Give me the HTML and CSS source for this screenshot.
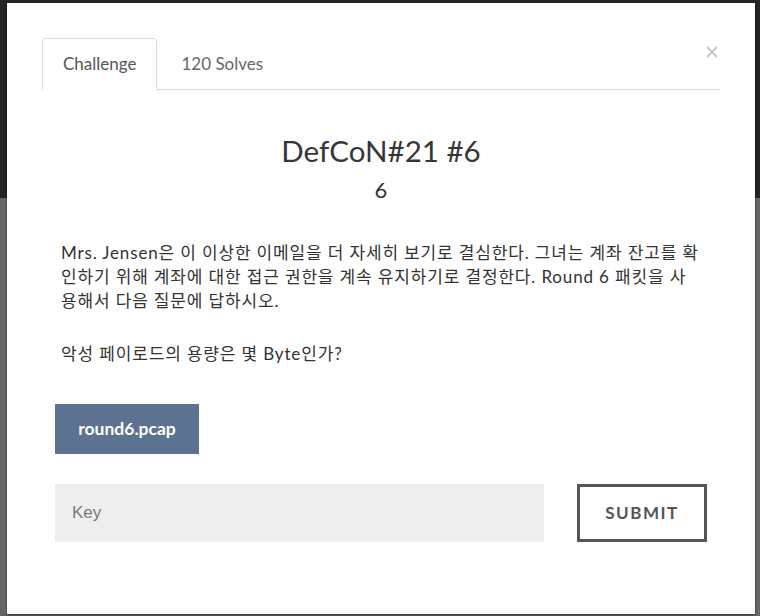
FILE: index.html
```html
<!DOCTYPE html>
<html lang="ko">

<head>
    <meta charset="UTF-8">
    <meta name="viewport" content="width=device-width, initial-scale=1.0">
    <title>DefCoN#21 #6</title>
    <link rel="stylesheet" href="styles.css">
</head>

<body>
    <div class="modal">
        <button class="close" type="button" aria-label="Close">
            <svg width="12" height="12" viewBox="0 0 12 12">
                <path d="M1 1L11 11M11 1L1 11" stroke="#c8c8c8" stroke-width="1.8" fill="none" />
            </svg>
        </button>

        <ul class="nav-tabs">
            <li class="tab active">Challenge</li>
            <li class="tab">120 Solves</li>
        </ul>

        <div class="challenge">
            <h2 class="challenge-name">DefCoN#21 #6</h2>
            <h3 class="challenge-value">6</h3>

            <div class="challenge-desc">
                <p>Mrs. Jensen은 이 이상한 이메일을 더 자세히 보기로 결심한다. 그녀는 계좌 잔고를 확인하기 위해 계좌에 대한 접근 권한을 계속 유지하기로 결정한다. Round 6 패킷을 사용해서 다음 질문에 답하시오.</p>
                <p>악성 페이로드의 용량은 몇 Byte인가?</p>
            </div>

            <div class="files">
                <a class="file-button">round6.pcap</a>
            </div>

            <form class="answer-row">
                <input class="answer-input" type="text" placeholder="Key">
                <button class="submit-button" type="button">SUBMIT</button>
            </form>
        </div>
    </div> <!-- .modal -->
</body>

</html>
```

FILE: styles.css
```css
html,
body {
    margin: 0;
    height: 100%;
}

body {
    background: linear-gradient(#242424 0, #242424 198px, #676767 198px);
    padding-top: 3px;
    box-sizing: border-box;
    overflow: hidden;
    font-family: Lato, "Noto Sans CJK KR", sans-serif;
    color: #333;
}

.modal {
    position: relative;
    width: 748px;
    height: 611px;
    margin-left: 7px;
    background: #fff;
    box-sizing: border-box;
    padding: 35px 35px 0 35px;
    box-shadow: 0 1px 2px rgba(0, 0, 0, 0.6);
}

.close {
    position: absolute;
    top: 43px;
    right: 37px;
    padding: 0;
    border: 0;
    background: none;
    line-height: 0;
}

.nav-tabs {
    display: flex;
    list-style: none;
    margin: 0;
    padding: 0;
    border-bottom: 1px solid #ddd;
}

.tab {
    padding: 13px 20px;
    margin-bottom: -1px;
    margin-right: 3px;
    font-size: 17px;
    line-height: 24px;
    color: #666;
    border: 1px solid transparent;
    border-radius: 4px 4px 0 0;
}

.tab.active {
    color: #555;
    background: #fff;
    border-color: #ddd #ddd #fff;
}

.challenge {
    padding: 0 13px;
}

.challenge-name {
    margin: 43px 0 0;
    text-align: center;
    font-size: 29.5px;
    font-weight: 400;
    line-height: 1.2;
    color: #363636;
}

.challenge-value {
    margin: 9px 0 0;
    text-align: center;
    font-size: 22px;
    font-weight: 400;
    line-height: 1.2;
    color: #333;
}

.challenge-desc {
    padding: 0 6px;
    margin-top: 37px;
}

.challenge-desc p {
    margin: 0 0 28px;
    font-size: 17px;
    letter-spacing: 0.85px;
    line-height: 24.3px;
}

.challenge-desc p:last-child {
    margin-bottom: 0;
}

.files {
    margin-top: 38px;
}

.file-button {
    display: inline-block;
    width: 144px;
    height: 50px;
    line-height: 50px;
    text-align: center;
    background: #5c7290;
    color: #fff;
    font-weight: 700;
    font-size: 17.5px;
}

.answer-row {
    display: flex;
    gap: 33px;
    margin: 30px 0 0;
}

.answer-input {
    flex: 1;
    height: 58px;
    box-sizing: border-box;
    border: 0;
    background: #eee;
    padding: 0 17px;
    font-family: "Liberation Sans", Arial, sans-serif;
    font-size: 17px;
    outline: none;
}

.answer-input::placeholder {
    color: #777;
}

.submit-button {
    width: 130px;
    height: 58px;
    box-sizing: border-box;
    border: 3px solid #555;
    background: #fff;
    color: #555;
    font-family: Lato, sans-serif;
    font-weight: 700;
    font-size: 17px;
    letter-spacing: 1.5px;
}
```
